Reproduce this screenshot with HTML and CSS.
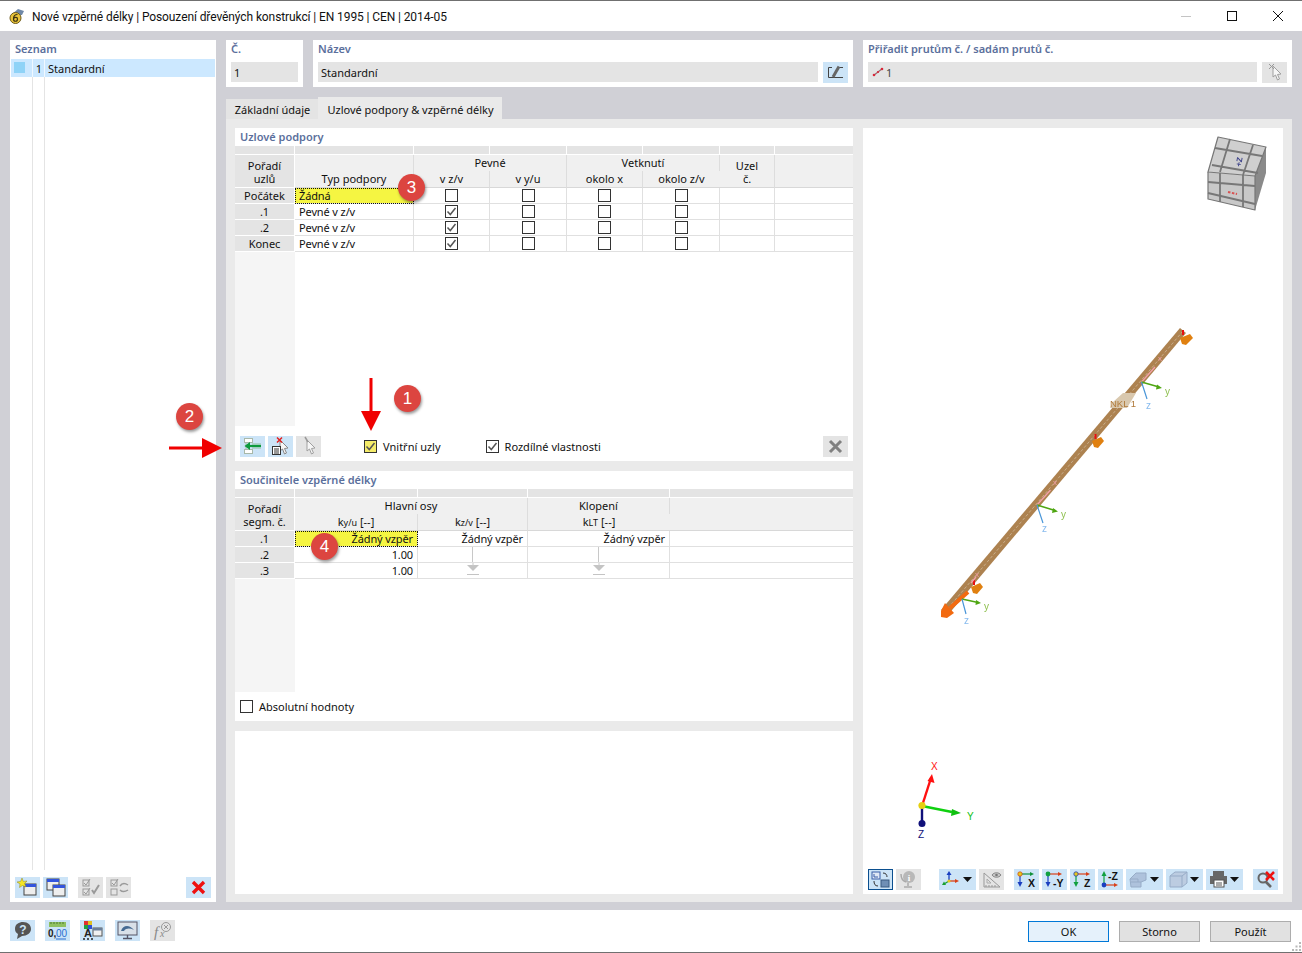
FILE: index.html
```html
<!DOCTYPE html>
<html lang="cs">
<head>
    <meta charset="UTF-8">
    <title>Nové vzpěrné délky</title>
    <link rel="stylesheet" href="styles.css">
</head>
<body>
<svg class="sprite" width="0" height="0">
    <symbol id="check" viewBox="0 0 13 13"><path d="M2.5 6.5 L5.3 9.500 L10.500 3" fill="none" stroke="#555" stroke-width="1.500"/></symbol>
    <symbol id="cursor" viewBox="0 0 25 21"><path d="M11 4 L11 15 L13.500 13 L15.500 18 L17.500 17 L15.500 12.500 L19 12 Z" fill="#f6f6f6" stroke="#a0a0a0"/></symbol>
    <symbol id="caret" viewBox="0 0 9 5"><path d="M0 0 H9 L4.500 5 Z" fill="#111"/></symbol>
    <symbol id="fill-end" viewBox="0 0 14 13"><path d="M1 2 H13 L7 8 Z" fill="#c4c4c4"/><path d="M1 11.500 H13" stroke="#c4c4c4"/><path d="M7 0 V3" stroke="#c8c8c8"/></symbol>
</svg>

<div class="window">
    <div class="titlebar">
        <svg class="app-icon" width="18" height="18" viewBox="0 0 18 18">
            <path d="M3 8 L10 2 L16 4 L14 8 Z" fill="#6f88a8"/>
            <circle cx="7.500" cy="11" r="5.500" fill="#e9c43a" stroke="#6d5a1c"/>
            <path d="M9.500 7.500 C6 7.500 5.500 10 5.500 12 C5.500 15 9.500 15 9.500 12 C9.500 10 6.500 10 5.700 11.500" fill="none" stroke="#3b3210" stroke-width="1.200"/>
        </svg>
        <span class="title">Nové vzpěrné délky | Posouzení dřevěných konstrukcí | EN 1995 | CEN | 2014-05</span>
        <div class="win-controls">
            <svg width="12" height="12" viewBox="0 0 12 12"><path d="M1 6.500 H11" stroke="#c4c4c4"/></svg>
            <svg width="12" height="12" viewBox="0 0 12 12"><rect x="1.500" y="1.500" width="9" height="9" fill="none" stroke="#111"/></svg>
            <svg width="12" height="12" viewBox="0 0 12 12"><path d="M1 1 L11 11 M11 1 L1 11" stroke="#111"/></svg>
        </div>
    </div>

    <div class="main">
        <div class="list-panel">
            <div class="caption">Seznam</div>
            <div class="list-body">
                <div class="list-row"><span class="swatch"></span><span class="list-no">1</span><span>Standardní</span></div>
            </div>
            <div class="list-tools">
                <div class="tb">
                    <svg viewBox="0 0 25 21"><rect x="9" y="7" width="12" height="11" fill="#eee" stroke="#444"/><rect x="9" y="7" width="12" height="3" fill="#3355dd"/><path d="M7 1 L8.300 4.400 L12 4 L9.600 6.600 L11 10 L7.500 8.500 L4.500 10.500 L5 7 L2 5 L5.600 4.400 Z" fill="#f5e625" stroke="#8a8420" stroke-width=".5"/></svg>
                </div>
                <div class="tb">
                    <svg viewBox="0 0 25 21"><rect x="4" y="2" width="12" height="11" fill="#eee" stroke="#444"/><rect x="4" y="2" width="12" height="3" fill="#3355dd"/><rect x="10" y="8" width="12" height="11" fill="#eee" stroke="#444"/><rect x="10" y="8" width="12" height="3" fill="#3355dd"/></svg>
                </div>
                <div class="tb off gap-l">
                    <svg viewBox="0 0 25 21"><g fill="none" stroke="#999"><rect x="5" y="3" width="6" height="6"/><rect x="5" y="12" width="6" height="6"/><path d="M6 6 L8 8 L12 2 M6 15 L8 17 L12 11"/><path d="M14 13 L16 16 L21 8" stroke-width="2"/></g></svg>
                </div>
                <div class="tb off">
                    <svg viewBox="0 0 25 21"><g fill="none" stroke="#999"><rect x="5" y="3" width="6" height="6"/><rect x="5" y="12" width="6" height="6"/><path d="M6 6 L8 8 L12 2"/><path d="M14 9 C16 6 19 6 22 8 M22 13 C19 15 16 15 14 13" stroke-width="1.500"/></g></svg>
                </div>
                <div class="tb push-r">
                    <svg viewBox="0 0 25 21"><path d="M7 5 L18 16 M18 5 L7 16" stroke="#ee1111" stroke-width="3.400"/></svg>
                </div>
            </div>
        </div>

        <div class="right">
            <div class="top-row">
                <div class="box box-no">
                    <div class="caption">Č.</div>
                    <div class="field">1</div>
                </div>
                <div class="box box-name">
                    <div class="caption">Název</div>
                    <div class="field-row">
                        <div class="field grow">Standardní</div>
                        <div class="tb small">
                            <svg viewBox="0 0 25 21"><path d="M9 5.500 H5.500 V15.500 H9 M9 15.500 H20 M15 5.500 H20" fill="none" stroke="#444"/><path d="M10 15 L16 4.500" stroke="#666" stroke-width="3"/></svg>
                        </div>
                    </div>
                </div>
                <div class="box box-assign">
                    <div class="caption">Přiřadit prutům č. / sadám prutů č.</div>
                    <div class="field-row">
                        <div class="field grow field-assign">
                            <svg width="12" height="10" viewBox="0 0 12 10"><path d="M1.500 8.500 L10.500 1.500" stroke="#9a6a70" stroke-width="1.200"/><circle cx="2" cy="8" r="1.300" fill="#d8283a"/><circle cx="6" cy="5" r="1.100" fill="#d8283a"/><circle cx="10" cy="2" r="1.300" fill="#d8283a"/></svg>
                            <span>1</span>
                        </div>
                        <div class="tb off small">
                            <svg viewBox="0 0 25 21"><use href="#cursor"/><path d="M7 2 L12 7 M12 2 L7 7" stroke="#999"/></svg>
                        </div>
                    </div>
                </div>
            </div>

            <div class="tabs">
                <div class="tab">Základní údaje</div>
                <div class="tab active">Uzlové podpory &amp; vzpěrné délky</div>
            </div>

            <div class="pane">
                <div class="pane-left">
                    <div class="section sec-nodes">
                        <div class="caption sec-title">Uzlové podpory</div>
                        <div class="grid-wrap">
                            <table class="grid">
                                <colgroup><col class="c-label"><col style="width:119px"><col style="width:76px"><col style="width:77px"><col style="width:76px"><col style="width:77px"><col style="width:55px"><col></colgroup>
                                <tr class="strip"><td></td><td></td><td></td><td></td><td></td><td></td><td></td><td></td></tr>
                                <tr class="head">
                                    <th class="lab two" rowspan="2">Pořadí<br>uzlů</th>
                                    <th rowspan="2" class="bottom">Typ podpory</th>
                                    <th colspan="2">Pevné</th>
                                    <th colspan="2">Vetknutí</th>
                                    <th rowspan="2" class="two">Uzel<br>č.</th>
                                    <th rowspan="2"></th>
                                </tr>
                                <tr class="head">
                                    <th class="sub">v z/v</th><th class="sub">v y/u</th><th class="sub">okolo x</th><th class="sub">okolo z/v</th>
                                </tr>
                                <tr>
                                    <td class="lab">Počátek</td><td class="active-cell">Žádná</td>
                                    <td class="mid"><span class="cb"></span></td><td class="mid"><span class="cb"></span></td><td class="mid"><span class="cb"></span></td><td class="mid"><span class="cb"></span></td><td></td><td></td>
                                </tr>
                                <tr>
                                    <td class="lab">.1</td><td>Pevné v z/v</td>
                                    <td class="mid"><span class="cb"><svg><use href="#check"/></svg></span></td><td class="mid"><span class="cb"></span></td><td class="mid"><span class="cb"></span></td><td class="mid"><span class="cb"></span></td><td></td><td></td>
                                </tr>
                                <tr>
                                    <td class="lab">.2</td><td>Pevné v z/v</td>
                                    <td class="mid"><span class="cb"><svg><use href="#check"/></svg></span></td><td class="mid"><span class="cb"></span></td><td class="mid"><span class="cb"></span></td><td class="mid"><span class="cb"></span></td><td></td><td></td>
                                </tr>
                                <tr>
                                    <td class="lab">Konec</td><td>Pevné v z/v</td>
                                    <td class="mid"><span class="cb"><svg><use href="#check"/></svg></span></td><td class="mid"><span class="cb"></span></td><td class="mid"><span class="cb"></span></td><td class="mid"><span class="cb"></span></td><td></td><td></td>
                                </tr>
                            </table>
                        </div>
                        <div class="sec-tools">
                            <div class="tb">
                                <svg viewBox="0 0 25 21"><rect x="4.500" y="2.500" width="8" height="4" fill="#fff" stroke="#a8b8a8"/><rect x="4.500" y="13.500" width="8" height="4" fill="#fff" stroke="#a8b8a8"/><path d="M6 6.500 V13.500" stroke="#a8b8a8"/><path d="M12 8 H21 M12 12 H21" stroke="#8fc0a0"/><path d="M21 10 H9" stroke="#0c9a3c" stroke-width="2.200"/><path d="M4.500 10 L10 6 V14 Z" fill="#0c9a3c"/></svg>
                            </div>
                            <div class="tb">
                                <svg viewBox="0 0 25 21"><path d="M12 4 L12 15 L14.500 13 L16.500 18 L18.500 17 L16.500 12.500 L20 12 Z" fill="#f6f6f6" stroke="#888"/><rect x="4.500" y="10.500" width="8" height="8" fill="#fff" stroke="#333"/><path d="M6 13 H11 M6 15 H11 M6 17 H11" stroke="#333"/><path d="M9 1.500 L14 6.500 M14 1.500 L9 6.500" stroke="#e02020" stroke-width="1.500"/></svg>
                            </div>
                            <div class="tb off">
                                <svg viewBox="0 0 25 21"><use href="#cursor"/><path d="M9 1 L12 6" stroke="#999" stroke-width="1.500"/></svg>
                            </div>
                            <label class="opt opt-inner"><span class="cb yellow"><svg><use href="#check"/></svg></span>Vnitřní uzly</label>
                            <label class="opt opt-diff"><span class="cb"><svg><use href="#check"/></svg></span>Rozdílné vlastnosti</label>
                            <div class="tb off push-r">
                                <svg viewBox="0 0 25 21"><path d="M7 5 L18 16 M18 5 L7 16" stroke="#808080" stroke-width="3"/></svg>
                            </div>
                        </div>
                    </div>

                    <div class="section sec-factors">
                        <div class="caption sec-title">Součinitele vzpěrné délky</div>
                        <div class="grid-wrap">
                            <table class="grid">
                                <colgroup><col class="c-label"><col style="width:123px"><col style="width:110px"><col style="width:142px"><col></colgroup>
                                <tr class="strip"><td></td><td></td><td></td><td></td><td></td></tr>
                                <tr class="head">
                                    <th class="lab two" rowspan="2">Pořadí<br>segm. č.</th>
                                    <th colspan="2">Hlavní osy</th>
                                    <th>Klopení</th>
                                    <th rowspan="2"></th>
                                </tr>
                                <tr class="head">
                                    <th class="sub">k<small>y/u</small> [--]</th><th class="sub">k<small>z/v</small> [--]</th><th class="sub">k<small>LT</small> [--]</th>
                                </tr>
                                <tr>
                                    <td class="lab">.1</td><td class="active-cell num">Žádný vzpěr</td><td class="num">Žádný vzpěr</td><td class="num">Žádný vzpěr</td><td></td>
                                </tr>
                                <tr>
                                    <td class="lab">.2</td><td class="num">1.00</td><td class="fill-down"><span class="fill-line"></span></td><td class="fill-down"><span class="fill-line"></span></td><td></td>
                                </tr>
                                <tr>
                                    <td class="lab">.3</td><td class="num">1.00</td><td class="fill-down"><svg class="fill-end"><use href="#fill-end"/></svg></td><td class="fill-down"><svg class="fill-end"><use href="#fill-end"/></svg></td><td></td>
                                </tr>
                            </table>
                        </div>
                        <div class="sec-foot">
                            <label class="opt"><span class="cb"></span>Absolutní hodnoty</label>
                        </div>
                    </div>

                    <div class="section sec-blank"></div>
                </div>

                <div class="preview">
                    <svg class="scene" viewBox="863 128 420 766" width="420" height="766">
                        <!-- navigation cube -->
                        <g class="soft">
                            <path d="M1218 137 L1266 147 L1255 176 L1208 172 Z" fill="#cfcfcf"/>
                            <path d="M1208 172 L1255 176 L1255 210 L1208 199 Z" fill="#c8c8c8"/>
                            <path d="M1266 147 L1266 173 L1255 210 L1255 176 Z" fill="#8a8a8a"/>
                            <g stroke="#777" stroke-width="1.800" fill="none" stroke-linejoin="round">
                                <path d="M1218 137 L1266 147 L1255 176 L1208 172 Z" stroke-width="1.200"/>
                                <path d="M1230 139 L1220 172 M1253 145 L1243 175 M1215 148 L1262 156 M1212 165 L1258 173"/>
                                <path d="M1208 172 L1208 199 L1255 210 L1255 176"  stroke-width="1.200"/>
                                <path d="M1208 182 L1255 186 M1208 193 L1255 204 M1220 173 L1220 202 M1243 175 L1243 207"/>
                            </g>
                            <text x="1241" y="167" class="cube-z" transform="rotate(-80 1241 167)">+Z</text>
                            <path d="M1228 192 L1237 194" stroke="#d85050" stroke-width="2" stroke-dasharray="2.500 1.500"/>
                        </g>

                        <!-- member -->
                        <g class="soft">
                            <path d="M1180 328 L1186 333 L947 616 L941 610 Z" fill="#ad8250"/>
                            <path d="M1183 331 L944 613" stroke="#c9ad8a" stroke-width="1" stroke-dasharray="3 2"/>
                            <path d="M1180 338 L1190 334 L1193 338 L1186 345 L1182 344 Z" fill="#e08010"/>
                            <path d="M1092 441 L1101 437 L1104 441 L1098 448 L1094 447 Z" fill="#e08010"/>
                            <path d="M971 587 L980 583 L983 587 L977 594 L973 593 Z" fill="#e08010"/>
                            <path d="M1183 330 v5 M1095.500 434 v5 M974 580 v5" stroke="#e81010" stroke-width="2"/>
                            <path d="M968 592 L950 608" stroke="#f26a10" stroke-width="4"/>
                            <path d="M945 603 L954 613 L947 618 L941 617 L941 611 Z" fill="#f26a10"/>
                            <path d="M1113 402 L1123 393 L1136 393 L1127 408 L1110 408 Z" fill="#d9c8ae"/>
                            <text x="1110" y="407" class="nkl">NKL 1</text>
                            <g class="axes">
                                <path d="M1141.500 382 L1155 367 M1037 505 L1050.500 490 M971 583 L976 577" stroke="#f3a0a8" stroke-width="1.300"/>
                                <path d="M1141.500 382 L1159 387 M1037 505 L1055 510.500 M962 599 L978 602.500" stroke="#4fa612" stroke-width="1.500"/>
                                <path d="M1157 384.500 L1162 388 L1156 389.500 Z M1053 508 L1058 511.500 L1052 513 Z M976 600 L981 603 L975.500 605 Z" fill="#4fa612"/>
                                <path d="M1141.500 382 L1147 399 M1037 505 L1043 523 M962 599 L966 614" stroke="#4a96d8" stroke-width="1.200"/>
                            </g>
                            <text x="1158" y="361" class="ax-x">x</text>
                            <text x="1053" y="485" class="ax-x">x</text>
                            <text x="975" y="577" class="ax-x">x</text>
                            <text x="1165" y="395" class="ax-y">y</text>
                            <text x="1146" y="409" class="ax-z">z</text>
                            <text x="1061" y="518" class="ax-y">y</text>
                            <text x="1042" y="532" class="ax-z">z</text>
                            <text x="984" y="610" class="ax-y">y</text>
                            <text x="964" y="624" class="ax-z">z</text>
                        </g>

                        <!-- global axes -->
                        <path d="M922 806 L931 778" stroke="#ff1010" stroke-width="2.400"/>
                        <path d="M932 774 L934.500 783 L927.500 781 Z" fill="#ff1010"/>
                        <path d="M922 806 L952 812" stroke="#10d010" stroke-width="2.400"/>
                        <path d="M961 813 L951 816 L952 809 Z" fill="#10c010"/>
                        <path d="M922 806 V822" stroke="#10107a" stroke-width="2.400"/>
                        <circle cx="922" cy="823.500" r="3.500" fill="#10107a"/>
                        <circle cx="922" cy="805.500" r="3.600" fill="#e6d010"/>
                        <text x="931" y="770" class="gx" fill="#ff1010">X</text>
                        <text x="967" y="820" class="gx" fill="#10c010">Y</text>
                        <text x="918" y="838" class="gx" fill="#10107a">Z</text>
                    </svg>

                    <div class="view-tools">
                        <div class="tb outlined">
                            <svg viewBox="0 0 25 21"><rect x="4" y="3" width="8" height="7" fill="#dfe8f5" stroke="#3a5fa8"/><path d="M6 8 V5 M6 8 H10" stroke="#3a5fa8"/><rect x="13" y="11" width="8" height="7" fill="#6f8fb5" stroke="#3a5a80"/><path d="M15 4 C18 4 19 6 19 8 M10 17 C7 17 6 15 6 12" fill="none" stroke="#333"/></svg>
                        </div>
                        <div class="tb off">
                            <svg viewBox="0 0 25 21"><circle cx="13" cy="8" r="6" fill="#b8b8b8"/><path d="M5 5 C5 9 7 12 10 13" fill="none" stroke="#aaa" stroke-width="1.500"/><text x="13" y="11.500" class="ico-i">i</text><path d="M12 14 V17 M8 18 H16" stroke="#aaa" stroke-width="1.500"/></svg>
                        </div>
                        <div class="tb wide gap-m">
                            <svg viewBox="0 0 25 21"><path d="M10 12 V4" stroke="#1a3fc0" stroke-width="1.300"/><path d="M10 2 L12.500 6 H7.500 Z" fill="#1a3fc0"/><path d="M10 12 H17" stroke="#d8401a" stroke-width="1.300"/><path d="M20 12 L16 14 V10 Z" fill="#d8401a"/><path d="M10 12 L5 15" stroke="#18a030" stroke-width="1.300"/><path d="M3 16 L5 12.500 L7 16 Z" fill="#18a030"/><circle cx="10" cy="12" r="1.600" fill="#e8c81a"/></svg>
                            <svg class="caret" viewBox="0 0 9 5"><use href="#caret"/></svg>
                        </div>
                        <div class="tb off">
                            <svg viewBox="0 0 25 21"><path d="M5 4 V18 H21 Z" fill="none" stroke="#999"/><path d="M7 18 V16 M10 18 V16 M13 18 V16 M16 18 V16" stroke="#999"/><path d="M8 10 V14 H12 Z" fill="none" stroke="#aaa"/><path d="M13 6 C15 3 20 3 22 6 C20 9 15 9 13 6 Z" fill="#c8c8c8" stroke="#888"/><circle cx="17.500" cy="6" r="1.300" fill="#777"/></svg>
                        </div>
                        <div class="tb gap-n">
                            <svg viewBox="0 0 25 21"><path d="M6 5 V15" stroke="#1a3fc0" stroke-width="1.200"/><path d="M6 5 H17" stroke="#10903a" stroke-width="1.200"/><path d="M20 5 L16 3 V7 Z" fill="#10903a"/><path d="M6 18 L3.500 13 H8.500 Z" fill="#1a3fc0"/><circle cx="6" cy="5" r="2.200" fill="#e8c81a" stroke="#d04010" stroke-width=".7"/><text x="14" y="17.500" class="ico-ax">X</text></svg>
                        </div>
                        <div class="tb">
                            <svg viewBox="0 0 25 21"><path d="M6 5 V15" stroke="#1a3fc0" stroke-width="1.200"/><path d="M6 5 H17" stroke="#d8401a" stroke-width="1.200"/><path d="M20 5 L16 3 V7 Z" fill="#d8401a"/><path d="M6 18 L3.500 13 H8.500 Z" fill="#1a3fc0"/><circle cx="6" cy="5" r="2.400" fill="#10a040"/><text x="11" y="17.500" class="ico-ax">-Y</text></svg>
                        </div>
                        <div class="tb">
                            <svg viewBox="0 0 25 21"><path d="M6 5 V15" stroke="#10a040" stroke-width="1.200"/><path d="M6 5 H17" stroke="#d8401a" stroke-width="1.200"/><path d="M20 5 L16 3 V7 Z" fill="#d8401a"/><path d="M6 18 L3.500 13 H8.500 Z" fill="#10a040"/><circle cx="6" cy="5" r="2.200" fill="#e8c81a" stroke="#1a3fc0" stroke-width=".8"/><text x="14" y="17.500" class="ico-ax">Z</text></svg>
                        </div>
                        <div class="tb">
                            <svg viewBox="0 0 25 21"><path d="M6 16 V6" stroke="#10a040" stroke-width="1.200"/><path d="M6 2 L3.500 7 H8.500 Z" fill="#10a040"/><path d="M6 16 H17" stroke="#d8401a" stroke-width="1.200"/><path d="M20 16 L16 14 V18 Z" fill="#d8401a"/><circle cx="6" cy="16" r="2.400" fill="#1a3fc0"/><text x="10" y="11" class="ico-ax">-Z</text></svg>
                        </div>
                        <div class="tb wide">
                            <svg class="faded" viewBox="0 0 25 21"><path d="M4 10 L10 4 H20 V11 L15 13 V18 H5 Z" fill="#a9bdd8" stroke="#8ea3bf"/><path d="M4 10 H12 V13 M5 13 H15" fill="none" stroke="#8ea3bf"/></svg>
                            <svg class="caret" viewBox="0 0 9 5"><use href="#caret"/></svg>
                        </div>
                        <div class="tb wide">
                            <svg class="faded" viewBox="0 0 25 21"><path d="M4 7 L9 3 H21 V14 L16 18 H4 Z" fill="#bac8de" stroke="#8ea3bf"/><path d="M4 7 H16 V18 M16 7 L21 3" fill="none" stroke="#8ea3bf"/></svg>
                            <svg class="caret" viewBox="0 0 9 5"><use href="#caret"/></svg>
                        </div>
                        <div class="tb wide">
                            <svg viewBox="0 0 25 21"><rect x="7" y="2" width="11" height="5" fill="#666"/><rect x="4" y="7" width="17" height="8" fill="#666"/><rect x="8" y="11" width="10" height="7" fill="#fff" stroke="#555"/><path d="M10 14 H16 M10 16 H16" stroke="#555"/></svg>
                            <svg class="caret" viewBox="0 0 9 5"><use href="#caret"/></svg>
                        </div>
                        <div class="tb gap-s">
                            <svg viewBox="0 0 25 21"><circle cx="10" cy="9" r="4.500" fill="none" stroke="#666" stroke-width="2"/><path d="M13 13 L18 18" stroke="#666" stroke-width="2.600"/><path d="M13 3 L21 11 M21 3 L13 11" stroke="#ee1111" stroke-width="2.600"/></svg>
                        </div>
                    </div>
                </div>
            </div>
        </div>
    </div>

    <div class="footer">
        <div class="foot-tools">
            <div class="tb">
                <svg viewBox="0 0 25 21"><path d="M5 9 C5 4 9 2 13 2 C18 2 21 5 21 9 C21 13 17 16 12 16 L7 19 L8 14 C6 13 5 11 5 9 Z" fill="#555"/><text x="13" y="13.500" class="ico-q">?</text></svg>
            </div>
            <div class="tb">
                <svg viewBox="0 0 25 21"><rect x="4" y="2" width="17" height="5" fill="#8fc060"/><path d="M6 2 V4 M9 2 V4 M12 2 V4 M15 2 V4 M18 2 V4" stroke="#4c7a30"/><text x="3" y="17" class="ico-num">0,</text><text x="11" y="17" class="ico-num blue">00</text><path d="M11 19 H21" stroke="#2a6ed0"/></svg>
            </div>
            <div class="tb">
                <svg viewBox="0 0 25 21"><rect x="4" y="1" width="4" height="4" fill="#e03030"/><rect x="8" y="1" width="4" height="4" fill="#e0c020"/><rect x="4" y="5" width="4" height="4" fill="#20a040"/><rect x="8" y="5" width="4" height="4" fill="#3050d0"/><text x="4" y="17" class="ico-a">A</text><path d="M3 19 H5 M7 19 H9 M11 19 H13" stroke="#222" stroke-width="1.500"/><rect x="13" y="8" width="9" height="8" fill="#f0f0f0" stroke="#555"/><rect x="13" y="8" width="9" height="2.500" fill="#6a7f9a"/></svg>
            </div>
            <div class="tb">
                <svg viewBox="0 0 25 21"><rect x="3" y="2" width="19" height="13" fill="#d8e0e8" stroke="#556"/><path d="M6 11 C8 5 14 4 19 10 C15 8 11 8 9 11 Z" fill="#456a92"/><path d="M12.500 15 V18 M8 18.500 H17" stroke="#556" stroke-width="1.400"/></svg>
            </div>
            <div class="tb off">
                <svg viewBox="0 0 25 21"><text x="4" y="17" class="ico-f">f</text><text x="10" y="17" class="ico-x">x</text><circle cx="16" cy="7" r="4.500" fill="none" stroke="#999"/><path d="M14 5 L18 9 M18 5 L14 9" stroke="#999"/></svg>
            </div>
        </div>
        <div class="foot-btns">
            <div class="btn default">OK</div>
            <div class="btn">Storno</div>
            <div class="btn">Použít</div>
        </div>
        <svg class="grip" width="11" height="11" viewBox="0 0 11 11"><path d="M8 1 h2 v2 h-2 Z M4.500 4.500 h2 v2 h-2 Z M8 4.500 h2 v2 h-2 Z M1 8 h2 v2 h-2 Z M4.500 8 h2 v2 h-2 Z M8 8 h2 v2 h-2 Z" fill="#b8b8b8"/></svg>
    </div>
</div>

<!-- notes drawn over the screenshot -->
<div class="badge b1">1</div>
<div class="badge b2">2</div>
<div class="badge b3">3</div>
<div class="badge b4">4</div>
<svg class="arrow arrow-down" width="24" height="54" viewBox="0 0 24 54"><path d="M12 0 V36" stroke="#f00000" stroke-width="3"/><path d="M2 33 H22 L12 53 Z" fill="#f00000"/></svg>
<svg class="arrow arrow-right" width="54" height="24" viewBox="0 0 54 24"><path d="M0 12 H36" stroke="#f00000" stroke-width="3"/><path d="M33 2 V22 L53 12 Z" fill="#f00000"/></svg>
</body>
</html>
```

FILE: styles.css
```css
* {
    box-sizing: border-box;
}

body {
    margin: 0;
    width: 1302px;
    height: 953px;
    position: relative;
    overflow: hidden;
    background: #fff;
    color: #111;
    font-family: "Noto Sans", sans-serif;
    font-size: 11px;
}

.sprite {
    position: absolute;
}

.window {
    height: 953px;
    display: flex;
    flex-direction: column;
    border-top: 1px solid #707070;
    border-bottom: 1px solid #707070;
}

/* title bar */
.titlebar {
    height: 30px;
    display: flex;
    align-items: center;
    padding-left: 8px;
    background: #fff;
}

.app-icon {
    margin-right: 6px;
}

.title {
    font-family: Roboto, sans-serif;
    font-size: 12px;
    letter-spacing: -.1px;
    padding-top: 2px;
}

.win-controls {
    margin-left: auto;
    display: flex;
    gap: 34px;
    padding-right: 18px;
}

/* main area */
.main {
    flex: 1;
    display: flex;
    gap: 10px;
    padding: 9px 10px 8px;
    background: #d0d0d6;
    min-height: 0;
}

.caption {
    color: #5b6f9c;
    font-weight: 600;
    font-size: 11px;
    line-height: 18px;
}

.list-panel {
    width: 206px;
    background: #fff;
    display: flex;
    flex-direction: column;
    padding: 0 1px;
}

.list-panel > .caption {
    padding-left: 4px;
    height: 19px;
}

.list-body {
    flex: 1;
    background:
        linear-gradient(#e4e4e4, #e4e4e4) 21px 0 / 1px 100% no-repeat,
        linear-gradient(#e4e4e4, #e4e4e4) 33px 0 / 1px 100% no-repeat;
    margin-bottom: 7px;
}

.list-row {
    height: 18px;
    display: flex;
    align-items: center;
    background:
        linear-gradient(#f0f8ff, #f0f8ff) 21px 0 / 1px 100% no-repeat,
        linear-gradient(#f0f8ff, #f0f8ff) 33px 0 / 1px 100% no-repeat,
        #cce8ff;
    padding: 2px 0 0 3px;
    line-height: 16px;
}

.swatch {
    width: 11px;
    height: 11px;
    background: #8fd3f7;
    margin-top: -3px;
}

.list-no {
    width: 17px;
    text-align: right;
    margin-right: 6px;
}

.list-tools {
    display: flex;
    gap: 3px;
    padding: 0 4px 4px;
}

/* toolbar buttons */
.tb {
    width: 25px;
    height: 21px;
    background: #cce4f7;
    display: flex;
    flex: none;
    align-items: center;
}

.tb > svg {
    width: 25px;
    height: 21px;
    flex: none;
}

.tb > svg.faded {
    opacity: .85;
}

.tb.off {
    background: #e4e4e4;
}

.tb.wide {
    width: 37px;
}

.tb.outlined {
    border: 1px solid #0b4f8f;
}

.tb.outlined > svg {
    margin: -1px;
}

.tb > .caret {
    width: 9px;
    height: 5px;
    margin-left: -1px;
}

.gap-l {
    margin-left: 7px;
}

.gap-m {
    margin-left: 15px;
}

.gap-n {
    margin-left: 7px;
}

.gap-s {
    margin-left: 7px;
}

.push-r {
    margin-left: auto;
}

/* right side */
.right {
    flex: 1;
    display: flex;
    flex-direction: column;
    min-width: 0;
}

.top-row {
    height: 47px;
    display: flex;
    gap: 10px;
}

.box {
    background: #fff;
    padding: 0 5px;
}

.box-no {
    width: 77px;
}

.box-name {
    width: 540px;
}

.box-assign {
    width: 429px;
}

.box .caption {
    height: 22px;
}

.field {
    height: 20px;
    background: #e4e4e4;
    line-height: 21px;
    padding-left: 3px;
}

.field-row {
    display: flex;
    gap: 5px;
}

.grow {
    flex: 1;
}

.field-assign {
    display: flex;
    align-items: center;
    gap: 2px;
    padding-left: 4px;
    color: #444;
}

.tabs {
    display: flex;
    align-items: flex-end;
    height: 22px;
    margin-top: 10px;
}

.tab {
    height: 20px;
    width: 92px;
    padding-left: 1px;
    background: #e4e4e4;
    text-align: center;
    line-height: 22px;
}

.tab.active {
    height: 22px;
    width: 184px;
    background: #eaeaea;
    line-height: 26px;
}

.pane {
    flex: 1;
    display: flex;
    gap: 10px;
    padding: 9px 9px 8px;
    background: #eaeaea;
    min-height: 0;
}

.pane-left {
    width: 618px;
    display: flex;
    flex-direction: column;
    gap: 10px;
}

.section {
    background: #fff;
    display: flex;
    flex-direction: column;
}

.sec-nodes {
    height: 333px;
}

.sec-factors {
    height: 250px;
}

.sec-blank {
    flex: 1;
}

.sec-title {
    height: 18px;
    padding-left: 5px;
}

.grid-wrap {
    flex: 1;
    background: linear-gradient(to right, #f5f5f5 60px, #fff 60px);
}

/* tables */
.grid {
    width: 618px;
    border-collapse: separate;
    border-spacing: 0;
    table-layout: fixed;
}

.c-label {
    width: 60px;
}

.grid td,
.grid th {
    padding: 0;
    height: 16px;
    line-height: 15px;
    font-weight: 400;
    vertical-align: top;
    border-right: 1px solid #e0e0e0;
    border-bottom: 1px solid #e0e0e0;
    white-space: nowrap;
    overflow: hidden;
}

.grid tr td:last-child,
.grid tr th:last-child {
    border-right: 0;
}

.grid td {
    padding-left: 4px;
    letter-spacing: -.12px;
}

.grid .strip td {
    height: 9px;
    line-height: 1px;
    font-size: 1px;
    padding: 0;
    background: #e4e4e4;
    border-right: 1px solid #fff;
    border-bottom: 1px solid #fff;
}

.grid .head th {
    background: #f0f0f0;
    text-align: center;
    border-right: 1px solid #ddd;
    border-bottom: 0;
}

.grid .head th.sub {
    height: 17px;
    border-bottom: 1px solid #d8d8d8;
}

.grid .head th.bottom {
    vertical-align: bottom;
    padding-bottom: 1px;
}

.grid .head th[rowspan] {
    border-bottom: 1px solid #d8d8d8;
}

.grid .head th.two {
    vertical-align: middle;
    line-height: 13px;
    padding-top: 2px;
}

.grid .head th.lab,
.grid td.lab {
    background: #e4e4e4;
    text-align: center;
    padding-left: 0;
    letter-spacing: 0;
    border-right: 1px solid #fff;
    border-bottom: 1px solid #fff;
}

small {
    font-size: 9px;
}

.grid td.mid {
    padding: 0;
}

.mid .cb {
    display: block;
    margin: 1px auto 0;
}

.grid td.num {
    text-align: right;
    padding-right: 4px;
}

.grid td.active-cell {
    background: #f5f542;
    outline: 1px dotted #111;
    outline-offset: -1px;
}

.cb {
    width: 13px;
    height: 13px;
    border: 1px solid #333;
    background: #fff;
    display: inline-block;
    position: relative;
    flex: none;
}

.cb svg {
    position: absolute;
    left: -1px;
    top: -1px;
    width: 13px;
    height: 13px;
}

.cb.yellow {
    background: #f5ec6a;
}

.grid td.fill-down {
    text-align: center;
    padding: 0;
}

.fill-line {
    display: block;
    width: 1px;
    height: 15px;
    margin: 0 auto;
    background: #c8c8c8;
}

.fill-end {
    display: block;
    width: 14px;
    height: 13px;
    margin: 0 auto;
}

.sec-tools {
    height: 35px;
    display: flex;
    align-items: flex-end;
    gap: 3px;
    padding: 0 5px 4px;
}

.opt {
    display: flex;
    align-items: center;
    gap: 6px;
    height: 21px;
}

.opt-inner {
    margin-left: 40px;
}

.opt-diff {
    margin-left: 42px;
}

.sec-foot {
    height: 29px;
    display: flex;
    align-items: center;
    padding-left: 5px;
}

/* graphics */
.preview {
    width: 420px;
    background: #fff;
    position: relative;
    display: flex;
    flex-direction: column;
    justify-content: flex-end;
}

.scene {
    position: absolute;
    left: 0;
    top: 0;
}

.view-tools {
    display: flex;
    gap: 3px;
    padding: 0 5px 4px;
    position: relative;
}

.soft {
    filter: blur(.4px);
}

.cube-z {
    font: 700 8px "Liberation Sans", sans-serif;
    fill: #3a3f88;
}

.nkl {
    font: 9.500px "Liberation Sans", sans-serif;
    fill: #b07a3a;
}

.ax-x {
    font: 8px "Liberation Sans", sans-serif;
    fill: #f3a0a8;
}

.ax-y {
    font: 10px "Liberation Sans", sans-serif;
    fill: #8fc050;
}

.ax-z {
    font: 10px "Liberation Sans", sans-serif;
    fill: #88bbee;
}

.gx {
    font: 10px "Liberation Sans", sans-serif;
}

.ico-ax {
    font: 700 10.500px "Liberation Sans", sans-serif;
    fill: #111;
}

.ico-i {
    font: 700 9px "Liberation Serif", serif;
    fill: #fff;
    text-anchor: middle;
}

.ico-q {
    font: 700 12px "Liberation Sans", sans-serif;
    fill: #cce4f7;
    text-anchor: middle;
}

.ico-num {
    font: 700 10px "Liberation Sans", sans-serif;
    fill: #222;
}

.ico-num.blue {
    font-weight: 400;
    fill: #2a6ed0;
}

.ico-a {
    font: 700 11px "Liberation Sans", sans-serif;
    fill: #222;
}

.ico-f {
    font: italic 15px "Liberation Serif", serif;
    fill: #888;
}

.ico-x {
    font: italic 10px "Liberation Serif", serif;
    fill: #888;
}

/* footer */
.footer {
    height: 42px;
    flex: none;
    display: flex;
    align-items: flex-start;
    padding: 10px 11px 0 10px;
    position: relative;
    background: #fff;
}

.foot-tools {
    display: flex;
    gap: 10px;
}

.foot-btns {
    margin-left: auto;
    display: flex;
    gap: 10px;
    margin-top: 1px;
}

.btn {
    width: 81px;
    height: 21px;
    background: #e1e1e1;
    border: 1px solid #adadad;
    text-align: center;
    line-height: 20px;
}

.btn.default {
    background: #e5f1fb;
    border-color: #0078d7;
}

.grip {
    position: absolute;
    right: 0;
    bottom: 0;
}

/* annotations */
.badge {
    position: absolute;
    width: 27px;
    height: 27px;
    border-radius: 50%;
    background: #dc4540;
    color: #fff;
    font-family: "Liberation Sans", sans-serif;
    font-size: 17px;
    line-height: 27px;
    text-align: center;
    box-shadow: 1px 2px 3px rgba(0, 0, 0, .4);
}

.b1 { left: 394px; top: 385px; }
.b2 { left: 176px; top: 403px; }
.b3 { left: 398px; top: 174px; }
.b4 { left: 311px; top: 533px; }

.arrow {
    position: absolute;
}

.arrow-down {
    left: 359px;
    top: 378px;
}

.arrow-right {
    left: 169px;
    top: 436px;
}
```
